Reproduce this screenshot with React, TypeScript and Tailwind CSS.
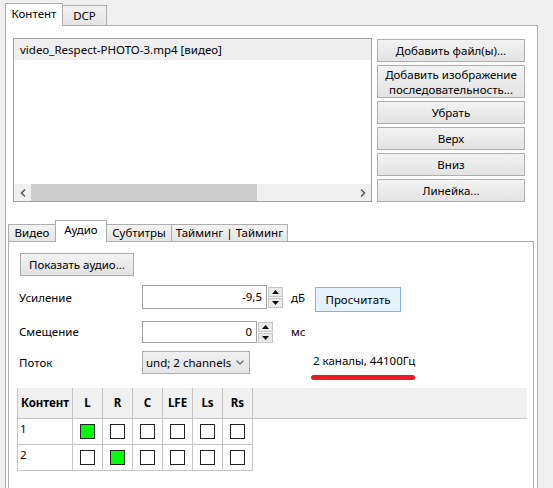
import React from 'react';

const btn = 'flex items-center justify-center border border-[#adadad] bg-linear-to-b from-[#f3f3f3] to-[#e3e3e3] text-center leading-[15px]';
const tabOff = 'flex items-center justify-center -ml-px border border-b-0 border-[#adadad] bg-linear-to-b from-[#f3f3f3] to-[#e5e5e5]';
const tabOn = 'relative z-10 -mb-px flex items-center justify-center border border-b-0 border-[#adadad] bg-white';

function Spin() {
  return (
    <div className="ml-[1px] flex w-[15px] flex-col gap-[1px]">
      <div className="flex h-[10px] items-center justify-center border border-[#c4c4c4] bg-[#eaeaea]">
        <svg width="7" height="4" viewBox="0 0 7 4"><path d="M0 4L3.5 0L7 4Z" fill="#111" /></svg>
      </div>
      <div className="flex h-[10px] items-center justify-center border border-[#c4c4c4] bg-[#eaeaea]">
        <svg width="7" height="4" viewBox="0 0 7 4"><path d="M0 0L3.5 4L7 0Z" fill="#111" /></svg>
      </div>
    </div>
  );
}

function Box({ on }: { on?: boolean }) {
  return <div className={on ? 'h-[15px] w-[15px] border border-[#222] bg-[#00ff00]' : 'h-[15px] w-[15px] border border-[#222] bg-white'} />;
}

const cols = ['L', 'R', 'C', 'LFE', 'Ls', 'Rs'];
const rows = [
  { n: '1', on: 0 },
  { n: '2', on: 1 },
];

export default function App() {
  return (
    <div className="h-[488px] w-[553px] overflow-hidden bg-[#f0f0f0] text-[11.5px] text-black font-['Noto_Sans',sans-serif]">
      {/* top tabs */}
      <div className="flex h-[25px] items-end pl-[5px]">
        <div className={`${tabOn} h-[23px] w-[58px] pb-[2px]`}>Контент</div>
        <div className={`${tabOff} h-[20px] w-[45px]`}>DCP</div>
      </div>

      <div className="ml-[5px] h-[470px] w-[533px] border border-[#adadad] bg-white">
        <div className="flex pl-[7px] pt-[12px]">
          {/* file list */}
          <div className="flex h-[164px] w-[359px] flex-col border border-[#a0a0a0]">
            <div className="h-[21px] bg-[#efefef] pl-[6px] leading-[21px]">video_Respect-PHOTO-3.mp4 [видео]</div>
            <div className="flex-1" />
            <div className="flex h-[17px]">
              <div className="flex w-[17px] items-center justify-center bg-[#f0f0f0]">
                <svg width="6" height="8" viewBox="0 0 6 8"><path d="M5 0.5L1.5 4L5 7.5" stroke="#606060" strokeWidth="1.6" fill="none" /></svg>
              </div>
              <div className="w-[226px] bg-[#cdcdcd]" />
              <div className="flex-1 bg-[#f0f0f0]" />
              <div className="flex w-[17px] items-center justify-center bg-[#f0f0f0]">
                <svg width="6" height="8" viewBox="0 0 6 8"><path d="M1 0.5L4.5 4L1 7.5" stroke="#606060" strokeWidth="1.6" fill="none" /></svg>
              </div>
            </div>
          </div>

          <div className="ml-[5px] mt-[1px] flex w-[148px] flex-col gap-[3px]">
            <div className={`${btn} h-[23px]`}>Добавить файл(ы)...</div>
            <div className={`${btn} h-[33px] leading-[14px]`}>
              Добавить изображение
              <br />
              последовательность...
            </div>
            <div className={`${btn} h-[23px]`}>Убрать</div>
            <div className={`${btn} h-[23px]`}>Верх</div>
            <div className={`${btn} h-[23px]`}>Вниз</div>
            <div className={`${btn} h-[23px]`}>Линейка...</div>
          </div>
        </div>

        {/* inner tabs */}
        <div className="ml-[2px] mt-[18px] flex h-[21px] items-end">
          <div className={`${tabOff} ml-0 h-[17px] w-[48px]`}>Видео</div>
          <div className={`${tabOn} -ml-px h-[22px] w-[52px] pb-[4px]`}>Аудио</div>
          <div className={`${tabOff} h-[17px] w-[66px]`}>Субтитры</div>
          <div className={`${tabOff} h-[17px] w-[117px]`}>Тайминг | Тайминг</div>
        </div>

        <div className="ml-[2px] h-[300px] w-[526px] border border-[#adadad] bg-white">
          <div className={`${btn} ml-[11px] mt-[11px] h-[23px] w-[114px]`}>Показать аудио...</div>

          {/* gain */}
          <div className="mt-[9px] flex items-start pl-[10px]">
            <div className="flex h-[26px] w-[123px] items-center">Усиление</div>
            <div className="flex h-[24px] w-[125px] items-center justify-end border border-[#a0a0a0] pr-[4px]">-9,5</div>
            <div className="mt-[2px]"><Spin /></div>
            <div className="ml-[8px] flex h-[26px] w-[24px] items-center">дБ</div>
            <div className="mt-[2px] flex h-[25px] w-[86px] items-center justify-center border border-[#7eb4ea] bg-[#e5f1fb]">Просчитать</div>
          </div>

          {/* offset */}
          <div className="mt-[9px] flex items-start pl-[10px]">
            <div className="flex h-[22px] w-[123px] items-center">Смещение</div>
            <div className="flex h-[22px] w-[115px] items-center justify-end border border-[#a0a0a0] pr-[4px]">0</div>
            <div className="mt-[1px]"><Spin /></div>
            <div className="ml-[18px] flex h-[22px] items-center">мс</div>
          </div>

          {/* stream */}
          <div className="mt-[8px] flex items-start pl-[10px]">
            <div className="flex h-[23px] w-[123px] items-center">Поток</div>
            <div className="flex h-[23px] w-[108px] items-center justify-between border border-[#acacac] bg-linear-to-b from-[#f0f0f0] to-[#e5e5e5] pl-[3px] pr-[5px]">
              <span>und; 2 channels</span>
              <svg width="8" height="5" viewBox="0 0 8 5"><path d="M0.5 0.5L4 4L7.5 0.5" stroke="#707070" strokeWidth="1.3" fill="none" /></svg>
            </div>
            <div className="ml-[61px] flex flex-col">
              <div className="mt-[2px] pl-[2px] leading-[16px]">2 каналы, 44100Гц</div>
              <div className="mt-[6px] h-[5px] w-[104px] rounded-full bg-[#ed1c24]" />
            </div>
          </div>

          {/* channel map */}
          <div className="ml-[8px] mt-[8px]">
            <div className="flex h-[31px] w-[510px] border-b border-l border-[#c4c4c4] bg-[#f0f0f0] font-bold">
              <div className="flex w-[55px] items-center justify-center border-r border-[#c4c4c4]">Контент</div>
              {cols.map(c => (
                <div key={c} className="flex w-[30px] items-center justify-center border-r border-[#c4c4c4]">{c}</div>
              ))}
            </div>
            {rows.map(r => (
              <div key={r.n} className="flex h-[26px] w-[236px] border-b border-l border-[#c4c4c4]">
                <div className="w-[55px] border-r border-[#c4c4c4] pl-[2px] pt-[3px] leading-[14px]">{r.n}</div>
                {cols.map((c, i) => (
                  <div key={c} className="flex w-[30px] items-center justify-center border-r border-[#c4c4c4]">
                    <Box on={i === r.on} />
                  </div>
                ))}
              </div>
            ))}
          </div>
        </div>
      </div>
    </div>
  );
}
